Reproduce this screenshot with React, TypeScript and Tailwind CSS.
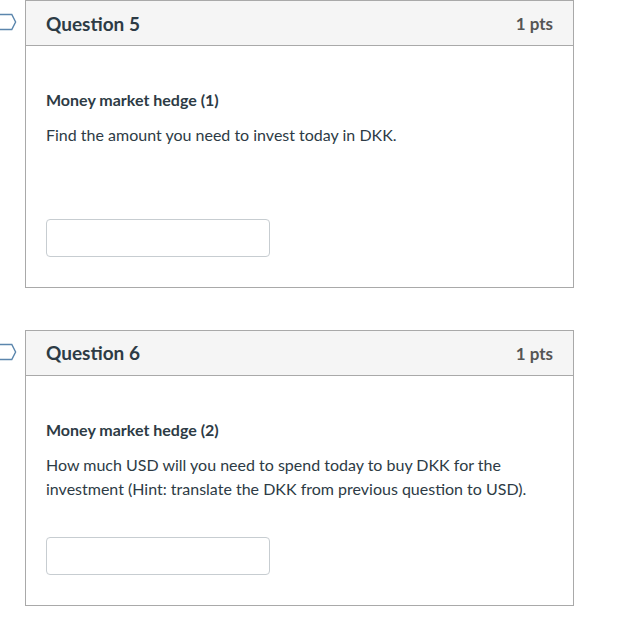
import React from "react";

function Flag() {
  return (
    <svg
      className="absolute left-0 top-[13px]"
      width="18"
      height="18"
      viewBox="0 0 18 18"
      fill="none"
    >
      <path
        d="M-2 1.5 H11.8 L15.6 9 L11.8 16.5 H-2"
        stroke="#5b86ad"
        strokeWidth="1.4"
        strokeLinejoin="miter"
      />
    </svg>
  );
}

function Card({
  title,
  heading,
  lines,
  gapClass,
}: {
  title: string;
  heading: string;
  lines: string[];
  gapClass: string;
}) {
  return (
    <div className="relative pl-[25px]">
      <Flag />
      <div className="w-[549px] border border-[#a9a9a9] bg-white">
        <div className="flex h-[45px] items-center justify-between border-b border-[#a9a9a9] bg-[#f5f5f5] px-[20px] pt-[2px]">
          <span className="text-[19px] font-bold text-[#2d3b45]">{title}</span>
          <span className="text-[17px] font-bold text-[#555555]">1 pts</span>
        </div>
        <div className="px-[20px] pt-[42px] pb-[30px]">
          <p className="text-[16px] font-bold leading-[24px] text-[#2d3b45]">{heading}</p>
          <p className="mt-[11px] text-[16px] leading-[24.5px] text-[#2d3b45]">
            {lines.map((l, i) => (
              <React.Fragment key={i}>
                {l}
                {i < lines.length - 1 && <br />}
              </React.Fragment>
            ))}
          </p>
          <div className={gapClass}>
            <div className="h-[38px] w-[224px] rounded-[4px] border border-[#c7cdd1] bg-white" />
          </div>
        </div>
      </div>
    </div>
  );
}

export default function App() {
  return (
    <div
      className="min-h-[639px] w-[624px] bg-white"
      style={{ fontFamily: "Lato, 'Noto Sans', sans-serif" }}
    >
      <div className="flex flex-col gap-[42px]">
        <Card
          title="Question 5"
          heading="Money market hedge (1)"
          lines={["Find the amount you need to invest today in DKK."]}
          gapClass="mt-[71px]"
        />
        <Card
          title="Question 6"
          heading="Money market hedge (2)"
          lines={[
            "How much USD will you need to spend today to buy DKK for the",
            "investment (Hint: translate the DKK from previous question to USD).",
          ]}
          gapClass="mt-[35px]"
        />
      </div>
    </div>
  );
}
